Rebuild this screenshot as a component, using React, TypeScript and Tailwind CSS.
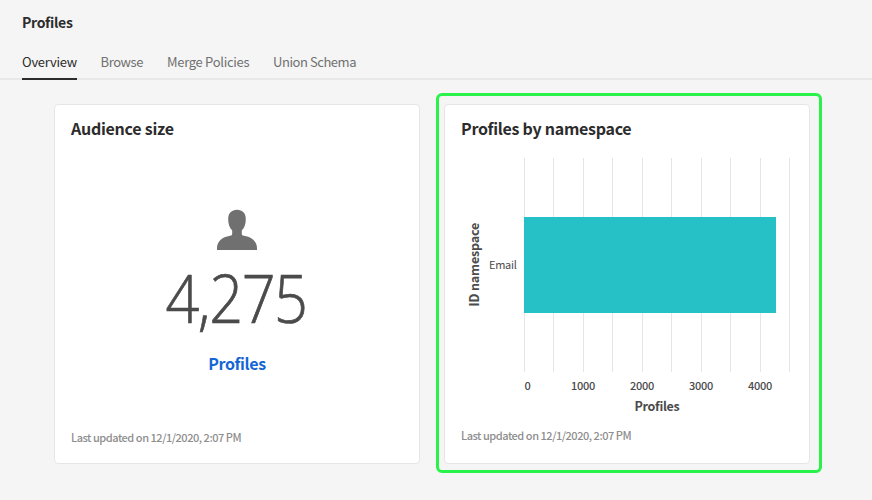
const gridLines = [0, 29, 59, 88, 118, 147, 177, 206, 236, 265];
const ticks = [
  { label: "0", x: 527.5 },
  { label: "1000", x: 583 },
  { label: "2000", x: 642 },
  { label: "3000", x: 701 },
  { label: "4000", x: 760 },
];

const tabs = [
  { label: "Overview", style: "mr-[23.5px] w-[55px] border-[#2c2c2c] text-[#2c2c2c] tracking-[-0.25px]" },
  { label: "Browse", style: "mr-[23.5px] w-[43px] border-transparent text-[#707070] tracking-[-0.4px]" },
  { label: "Merge Policies", style: "mr-[24px] w-[82px] border-transparent text-[#707070] tracking-[-0.3px]" },
  { label: "Union Schema", style: "w-[83px] border-transparent text-[#707070] tracking-[-0.45px]" },
];

function Person() {
  return (
    <svg width="40" height="41" viewBox="0 0 40 41" fill="#707070" className="mx-auto block">
      <path d="M20 0.7C14.6 0.7 11.2 4.2 11.2 9.9C11.2 14.7 12.4 18.4 15.2 21.5V24.4C15.2 26 14.5 26.5 13 26.8C4.8 28.2 0 32.6 0 39.3V41H40V39.3C40 32.6 35.2 28.2 27 26.8C25.5 26.5 24.8 26 24.8 24.4V21.5C27.6 18.4 28.8 14.7 28.8 9.9C28.8 4.2 25.4 0.7 20 0.7Z" />
    </svg>
  );
}

function Updated() {
  return (
    <div className="text-[11px] leading-4 font-medium tracking-[-0.47px] whitespace-nowrap text-[#8e8e8e]">
      Last updated on 12/1/2020, 2:07 PM
    </div>
  );
}

function Chart() {
  return (
    <svg
      width="364"
      height="270"
      viewBox="445 150 364 270"
      className="block font-['Noto_Sans_CJK_SC',sans-serif]"
    >
      {gridLines.map((x) => (
        <rect key={x} x={524 + x} y="158" width="1" height="214" fill="#e5e5e5" />
      ))}
      <rect x="524" y="217" width="252" height="96" fill="#26c0c7" />
      <text
        x="-306.5"
        y="478.5"
        transform="rotate(-90)"
        fontSize="12.5"
        fontWeight="700"
        letterSpacing="-0.16"
        fill="#4b4b4b"
      >
        ID namespace
      </text>
      <text x="489" y="269" fontSize="11" letterSpacing="-0.3" fill="#4b4b4b">
        Email
      </text>
      {ticks.map((t) => (
        <text
          key={t.label}
          x={t.x}
          y="390"
          fontSize="11"
          fontWeight="500"
          letterSpacing="-0.25"
          textAnchor="middle"
          fill="#4b4b4b"
        >
          {t.label}
        </text>
      ))}
      <text
        x="657"
        y="411"
        fontSize="12.5"
        fontWeight="700"
        letterSpacing="-0.3"
        textAnchor="middle"
        fill="#4b4b4b"
      >
        Profiles
      </text>
    </svg>
  );
}

export default function App() {
  return (
    <div className="flex h-[500px] w-[872px] flex-col overflow-hidden bg-[#f5f5f5] font-['Noto_Sans_CJK_SC',sans-serif]">
      <h1 className="mt-[12px] ml-[22px] h-5 text-[14px] leading-5 font-bold tracking-[-0.3px] text-[#2c2c2c]">
        Profiles
      </h1>
      <nav className="mt-[20px] flex h-[28px] shrink-0 border-b-2 border-[#e8e8e8] pl-[22px]">
        {tabs.map((t) => (
          <div
            key={t.label}
            className={`h-[28px] shrink-0 border-b-2 text-[13px] leading-5 whitespace-nowrap ${t.style}`}
          >
            {t.label}
          </div>
        ))}
      </nav>
      <main className="mt-[13px] flex pl-[54px]">
        <section className="mt-[11px] flex h-[360px] w-[366px] flex-col rounded-[4px] border border-[#e6e6e6] bg-white px-4">
          <h2 className="mt-[11px] text-[16px] leading-6 font-bold tracking-[-0.25px] text-[#2c2c2c]">
            Audience size
          </h2>
          <div className="mt-[69px]">
            <Person />
          </div>
          <div className="mt-[7px] mr-[2px] origin-center scale-x-[0.9] text-center font-['Open_Sans',sans-serif] text-[66px] leading-[80px] font-light tracking-[-1.6px] text-[#4b4b4b] [-webkit-text-stroke:0.7px_#4b4b4b]">
            4,275
          </div>
          <div className="mt-[14px] text-center text-[16px] leading-6 font-bold tracking-[-0.35px] text-[#1466d4]">
            Profiles
          </div>
          <div className="mt-[54px]">
            <Updated />
          </div>
        </section>
        <div className="ml-4 h-[380px] w-[386px] rounded-[6px] border-[3px] border-[#29f24b] pt-[8px] pl-[5px]">
          <section className="h-[360px] w-[366px] rounded-[4px] border border-[#e6e6e6] bg-white">
            <h2 className="mt-[11px] ml-4 text-[16px] leading-6 font-bold tracking-[-0.28px] text-[#2c2c2c]">
              Profiles by namespace
            </h2>
            <div className="mt-[10px]">
              <Chart />
            </div>
            <div className="mt-[7px] ml-4">
              <Updated />
            </div>
          </section>
        </div>
      </main>
    </div>
  );
}
